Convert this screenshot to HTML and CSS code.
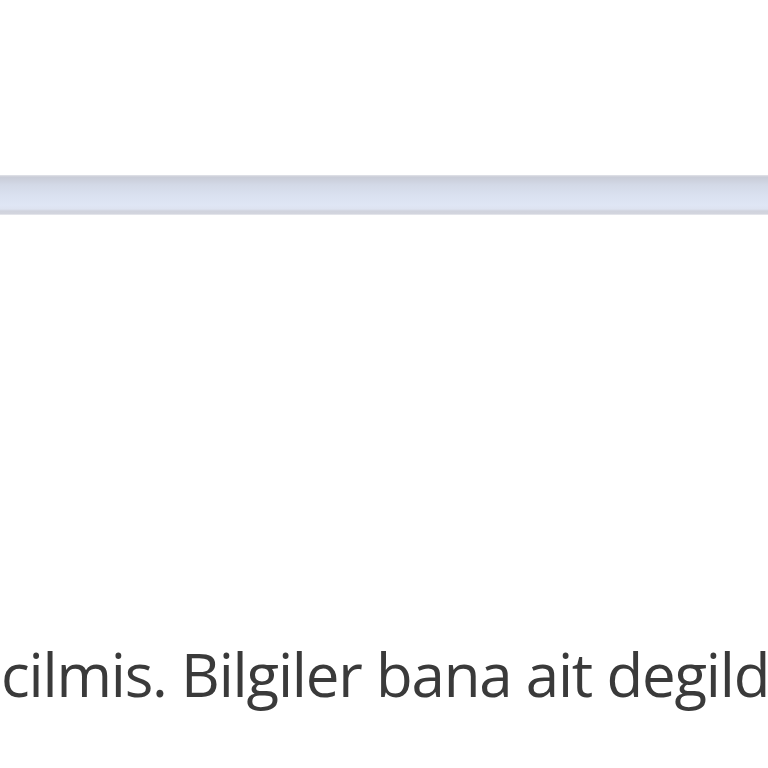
FILE: index.html
```html
<!DOCTYPE html>
<html lang="tr">
<head>
<meta charset="utf-8">
<link rel="stylesheet" href="styles.css">
</head>
<body>
<div class="page">
  <div class="top"></div>
  <div class="bar"></div>
  <p class="note">cilmis. Bilgiler bana ait degildir.</p>
</div>
</body>
</html>
```

FILE: styles.css
```css
html, body {
  margin: 0;
  padding: 0;
  background: #ffffff;
}
.page {
  width: 768px;
  height: 768px;
  overflow: hidden;
  display: flex;
  flex-direction: column;
}
.top {
  height: 175px;
}
.bar {
  height: 40px;
  background: linear-gradient(
    #e2e4ea 0,
    #c9ccd7 2px,
    #cbcfdb 4px,
    #d3d9e7 10px,
    #dbe2f1 22px,
    #dfe6f5 30px,
    #dde3f1 34px,
    #d0d3dd 36px,
    #d3d5de 39px,
    #f2f3f6 40px
  );
}
.note {
  margin: 418px 0 0 0;
  padding: 0 0 0 1px;
  font-family: "Open Sans", "Noto Sans", sans-serif;
  font-size: 60px;
  letter-spacing: -1.2px;
  line-height: normal;
  color: #3a3a3a;
  white-space: nowrap;
  overflow: hidden;
}
```
